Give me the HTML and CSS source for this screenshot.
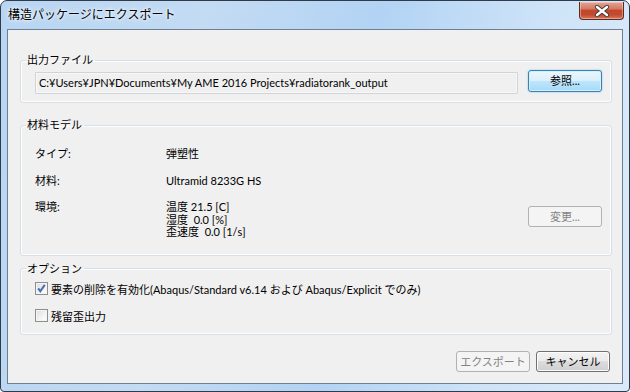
FILE: index.html
```html
<!DOCTYPE html>
<html lang="ja">
<head>
<meta charset="utf-8">
<title>構造パッケージにエクスポート</title>
<link rel="stylesheet" href="styles.css">
</head>
<body>
<div class="window">
  <div class="titlebar">
    <span class="title">構造パッケージにエクスポート</span>
    <div class="close">
      <svg width="16" height="12" viewBox="0 0 16 12">
        <path d="M3 2 L13 10 M13 2 L3 10" stroke="#3b3b3b" stroke-width="4.2" stroke-linecap="round" fill="none"/>
        <path d="M3 2 L13 10 M13 2 L3 10" stroke="#ffffff" stroke-width="2.4" stroke-linecap="round" fill="none"/>
      </svg>
    </div>
  </div>
  <div class="client">
    <fieldset class="group g-file">
      <legend>出力ファイル</legend>
      <div class="file-row">
        <div class="path">C:¥Users¥JPN¥Documents¥My AME 2016 Projects¥radiatorank_output</div>
        <div class="btn btn-default">参照...</div>
      </div>
    </fieldset>

    <fieldset class="group g-material">
      <legend>材料モデル</legend>
      <div class="prop">
        <div class="prop-label">タイプ:</div>
        <div class="prop-value">弾塑性</div>
      </div>
      <div class="prop">
        <div class="prop-label">材料:</div>
        <div class="prop-value">Ultramid 8233G HS</div>
      </div>
      <div class="prop prop-env">
        <div class="prop-label">環境:</div>
        <div class="prop-value">
          <div>温度 21.5 [C]</div>
          <div>湿度&nbsp; 0.0 [%]</div>
          <div>歪速度&nbsp; 0.0 [1/s]</div>
        </div>
        <div class="btn btn-disabled">変更...</div>
      </div>
    </fieldset>

    <fieldset class="group g-options">
      <legend>オプション</legend>
      <div class="check">
        <span class="box checked">
          <svg width="11" height="11" viewBox="0 0 11 11"><path d="M2.2 5.4 L4.3 8.2 L8.8 1.8" stroke="#4a6fb5" stroke-width="2" fill="none"/></svg>
        </span>
        <span>要素の削除を有効化(Abaqus/Standard v6.14 および Abaqus/Explicit でのみ)</span>
      </div>
      <div class="check">
        <span class="box"></span>
        <span>残留歪出力</span>
      </div>
    </fieldset>

    <div class="actions">
      <div class="btn btn-disabled">エクスポート</div>
      <div class="btn">キャンセル</div>
    </div>
  </div>
</div>
</body>
</html>
```

FILE: styles.css
```css
html, body {
    margin: 0;
    padding: 0;
}

body {
    width: 630px;
    height: 392px;
    overflow: hidden;
    font-family: Lato, "Noto Sans CJK JP", sans-serif;
    font-size: 11px;
    color: #000;
}

.window {
    box-sizing: border-box;
    width: 630px;
    height: 392px;
    border: 1px solid #2f3b48;
    border-radius: 7px 7px 4px 4px;
    padding: 0 6px 7px 6px;
    background: linear-gradient(100deg, #b8d5f2 0%, #c3dbf3 30%, #b2d3f4 55%, #cfe4f8 80%, #dbeafa 100%);
    display: flex;
    flex-direction: column;
}

/* title bar */
.titlebar {
    height: 28px;
    display: flex;
    align-items: flex-start;
    justify-content: space-between;
}

.title {
    margin: 5px 0 0 1px;
    line-height: 16px;
    font-family: "Noto Sans CJK JP", sans-serif;
    font-size: 12px;
    text-shadow: 0 0 6px #fff, 0 0 3px #fff;
}

.close {
    width: 43px;
    height: 17px;
    margin-top: 1px;
    margin-right: -1px;
    border: 1px solid #5e2a20;
    border-top: none;
    border-radius: 0 0 4px 4px;
    background: linear-gradient(#e3a595 0%, #d47a63 40%, #c3462c 50%, #c24a30 75%, #d9785c 100%);
    box-shadow: inset 0 0 0 1px rgba(255, 255, 255, 0.35);
    display: flex;
    align-items: center;
    justify-content: center;
}

.close svg {
    display: block;
}

/* client area */
.client {
    flex: 1;
    border: 1px solid #6e7f91;
    background: #f0f0f0;
    display: flex;
    flex-direction: column;
}

.group {
    margin: 0 10px 0 12px;
    padding: 0 9px 0 14px;
    border: 1px solid #d5dfe5;
    border-radius: 3px;
    box-shadow: inset 0 0 0 1px #fff;
    min-width: 0;
}

.group legend {
    margin-left: -9px;
    padding: 0 2px 0 1px;
    line-height: 14px;
}

.g-file {
    margin-top: 23px;
    padding-top: 3px;
    padding-bottom: 8px;
}

.file-row {
    display: flex;
    align-items: flex-start;
}

.path {
    flex: 1;
    height: 20px;
    margin-top: 2px;
    margin-right: 10px;
    padding-left: 3px;
    border: 1px solid #d0d3d8;
    border-radius: 1px;
    box-shadow: inset 0 0 0 1px #f7f7f7;
    line-height: 20px;
    white-space: nowrap;
    overflow: hidden;
}

/* buttons */
.btn {
    box-sizing: border-box;
    width: 74px;
    height: 21px;
    border: 1px solid #707070;
    border-radius: 3px;
    background: linear-gradient(#f2f2f2 0%, #ebebeb 49%, #dddddd 50%, #cfcfcf 100%);
    box-shadow: inset 0 0 0 1px #fcfcfc;
    text-align: center;
    line-height: 19px;
    flex: none;
}

.btn-default {
    height: 22px;
    line-height: 20px;
    border-color: #3c7fb1;
    background: linear-gradient(#eaf6fd 0%, #d9f0fc 49%, #bee6fd 50%, #a7d9f5 100%);
    box-shadow: inset 0 0 0 1px #d4f0fd, 0 0 2px #75c5f0;
}

.btn-disabled {
    border-color: #adb2b5;
    background: #f4f4f4;
    box-shadow: none;
    color: #838383;
}

/* material */
.g-material {
    margin-top: 15px;
    padding-top: 15px;
    padding-bottom: 16px;
}

.prop {
    display: flex;
    line-height: 14px;
    margin-bottom: 13px;
}

.prop:last-child {
    margin-bottom: 0;
}

.prop-label {
    width: 131px;
    flex: none;
}

.prop-env {
    line-height: 12.5px;
}

.prop-env .btn {
    margin-left: auto;
    margin-top: 5px;
    line-height: 19px;
}

/* options */
.g-options {
    margin-top: 6px;
    padding-top: 6px;
    padding-bottom: 11px;
}

.check {
    display: flex;
    align-items: center;
    gap: 3px;
    height: 14px;
    margin-bottom: 13px;
}

.check:last-child {
    margin-bottom: 0;
}

.box {
    box-sizing: border-box;
    width: 13px;
    height: 13px;
    border: 1px solid #8e8f8f;
    background: linear-gradient(135deg, #dcdcdc 0%, #f4f4f4 60%, #fff 100%);
    box-shadow: inset 0 0 0 1px #f4f4f4;
    display: flex;
    align-items: center;
    justify-content: center;
    flex: none;
}

.box svg {
    display: block;
}

/* bottom buttons */
.actions {
    display: flex;
    justify-content: flex-end;
    gap: 6px;
    margin-top: 16px;
    margin-right: 12px;
}
```
